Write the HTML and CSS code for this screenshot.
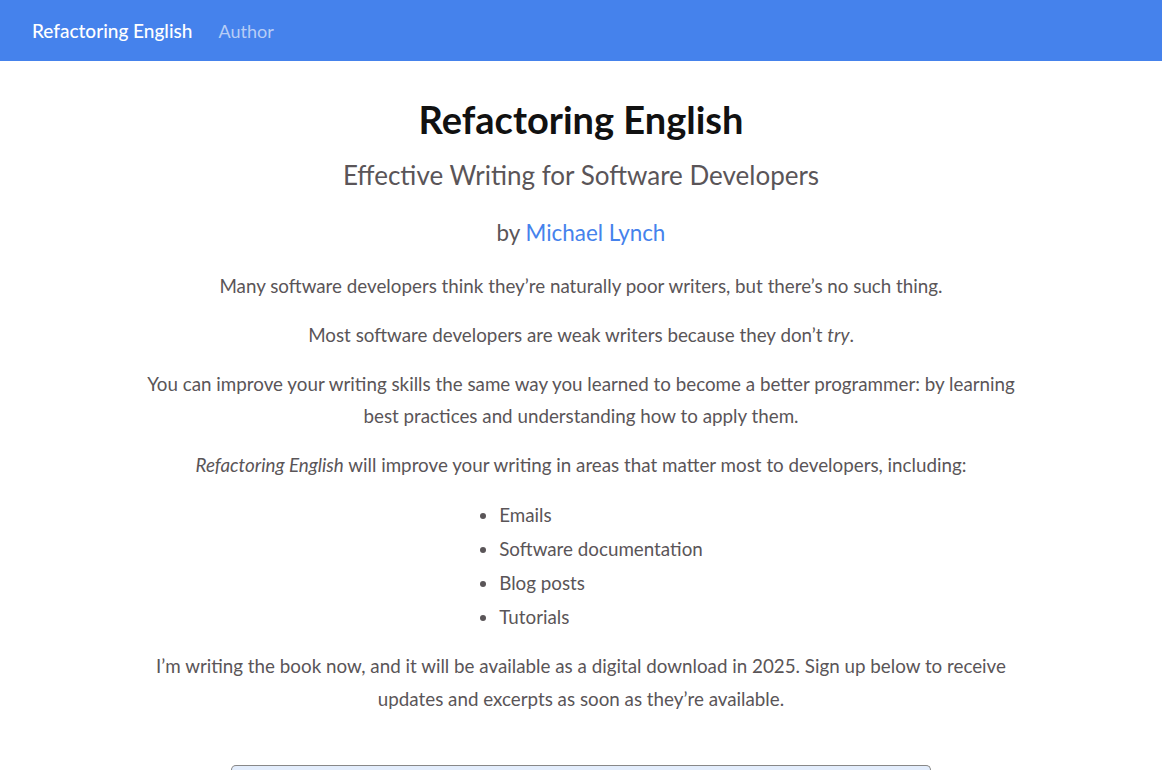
FILE: index.html
```html
<!DOCTYPE html>
<html lang="en">
<head>
<meta charset="utf-8">
<title>Refactoring English</title>
<link rel="stylesheet" href="styles.css">
</head>
<body>
<nav class="navbar">
  <a class="brand" href="#">Refactoring English</a>
  <a class="nav-link" href="#">Author</a>
</nav>
<main class="container">
  <h1 class="title">Refactoring English</h1>
  <p class="subtitle">Effective Writing for Software Developers</p>
  <p class="byline">by <a href="#">Michael Lynch</a></p>
  <p>Many software developers think they’re naturally poor writers, but there’s no such thing.</p>
  <p>Most software developers are weak writers because they don’t <em>try</em>.</p>
  <p>You can improve your writing skills the same way you learned to become a better programmer: by learning best practices and understanding how to apply them.</p>
  <p><em>Refactoring English</em> will improve your writing in areas that matter most to developers, including:</p>
  <div class="list-wrap">
    <ul class="topics">
      <li>Emails</li>
      <li>Software documentation</li>
      <li>Blog posts</li>
      <li>Tutorials</li>
    </ul>
  </div>
  <p class="last">I’m writing the book now, and it will be available as a digital download in 2025. Sign up below to receive updates and excerpts as soon as they’re available.</p>
  <div class="signup"></div>
</main>
</body>
</html>
```
FILE: styles.css
```css
html, body {
  margin: 0;
  padding: 0;
  background: #fff;
}
body {
  font-family: Lato, "Noto Sans", sans-serif;
  color: #5a5558;
  font-size: 18.8px;
  line-height: 32px;
}
.navbar {
  height: 61px;
  background: #4582ec;
  display: flex;
  align-items: center;
  padding: 0 32px;
  gap: 26px;
}
.navbar a {
  text-decoration: none;
  font-size: 19px;
}
.brand {
  color: #fff;
  font-weight: 500;
}
.nav-link {
  color: #b7cdf6;
  font-size: 18px !important;
}
.container {
  width: 900px;
  margin: 0 auto;
  text-align: center;
  padding-top: 34px;
}
.title {
  font-size: 38px;
  line-height: 48px;
  font-weight: 700;
  color: #111;
  margin: 0 0 12px;
}
.subtitle {
  font-size: 26px;
  line-height: 40px;
  margin: 0 0 20px;
}
.byline {
  font-size: 22.4px;
  line-height: 36px;
  margin: 0 0 19px;
}
.byline a {
  color: #4582ec;
  text-decoration: none;
}
p {
  margin: 0 0 17px;
}
.list-wrap {
  text-align: center;
}
.topics {
  display: inline-block;
  text-align: left;
  margin: 0 0 15px;
  padding-left: 40px;
}
.topics li {
  line-height: 34px;
}
.last {
  line-height: 33px;
}
.signup {
  width: 698px;
  height: 4px;
  margin: 50px auto 0;
  background: #e3edfc;
  border: 1px solid #888;
  border-bottom: none;
  border-radius: 5px 5px 0 0;
}
```
